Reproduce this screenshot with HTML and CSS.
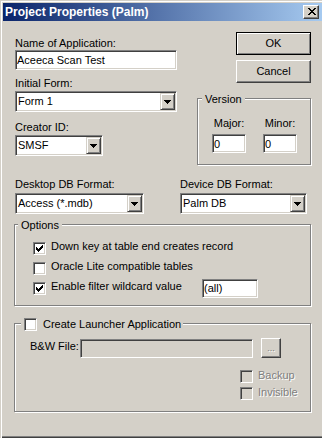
FILE: index.html
```html
<!DOCTYPE html>
<html lang="en">
<head>
    <meta charset="UTF-8">
    <meta name="viewport" content="width=device-width, initial-scale=1.0">
    <title>Project Properties (Palm)</title>
    <link rel="stylesheet" href="styles.css">
</head>
<body>
    <div class="window">
        <!-- Title bar -->
        <div class="titlebar">
            <span class="title">Project Properties (Palm)</span>
            <button class="close-btn" aria-label="Close">
                <svg width="8" height="7" viewBox="0 0 8 7"><path d="M0 0h2v1H0zM6 0h2v1H6zM1 1h2v1H1zM5 1h2v1H5zM2 2h4v1H2zM3 3h2v1H3zM2 4h4v1H2zM1 5h2v1H1zM5 5h2v1H5zM0 6h2v1H0zM6 6h2v1H6z"/></svg>
            </button>
        </div>

        <div class="dialog-body">
            <div class="top">
                <!-- Left: name, form, creator -->
                <div class="left-col">
                    <label class="lbl lbl-name">Name of Application:</label>
                    <input type="text" class="edit name-edit" value="Aceeca Scan Test">
                    <label class="lbl lbl-form">Initial Form:</label>
                    <div class="combo combo-form">
                        <span class="combo-text">Form 1</span>
                        <span class="combo-btn"><svg width="7" height="4" viewBox="0 0 7 4"><path d="M0 0h7v1H0zM1 1h5v1H1zM2 2h3v1H2zM3 3h1v1H3z"/></svg></span>
                    </div>
                    <label class="lbl lbl-creator">Creator ID:</label>
                    <div class="combo combo-creator">
                        <span class="combo-text">SMSF</span>
                        <span class="combo-btn"><svg width="7" height="4" viewBox="0 0 7 4"><path d="M0 0h7v1H0zM1 1h5v1H1zM2 2h3v1H2zM3 3h1v1H3z"/></svg></span>
                    </div>
                </div>

                <!-- Right: buttons and version -->
                <div class="right-col">
                    <button class="btn btn-default">OK</button>
                    <button class="btn btn-cancel">Cancel</button>
                    <fieldset class="group version-group">
                        <legend>Version</legend>
                        <div class="version-fields">
                            <div class="version-field">
                                <span class="version-lbl">Major:</span>
                                <input type="text" class="edit small-edit" value="0">
                            </div>
                            <div class="version-field">
                                <span class="version-lbl">Minor:</span>
                                <input type="text" class="edit small-edit" value="0">
                            </div>
                        </div>
                    </fieldset>
                </div>
            </div>

            <!-- DB formats -->
            <div class="db-row">
                <div class="db-field">
                    <label class="lbl">Desktop DB Format:</label>
                    <div class="combo combo-db">
                        <span class="combo-text">Access (*.mdb)</span>
                        <span class="combo-btn"><svg width="7" height="4" viewBox="0 0 7 4"><path d="M0 0h7v1H0zM1 1h5v1H1zM2 2h3v1H2zM3 3h1v1H3z"/></svg></span>
                    </div>
                </div>
                <div class="db-field">
                    <label class="lbl">Device DB Format:</label>
                    <div class="combo combo-db">
                        <span class="combo-text">Palm DB</span>
                        <span class="combo-btn"><svg width="7" height="4" viewBox="0 0 7 4"><path d="M0 0h7v1H0zM1 1h5v1H1zM2 2h3v1H2zM3 3h1v1H3z"/></svg></span>
                    </div>
                </div>
            </div>

            <!-- Options -->
            <fieldset class="group options-group">
                <legend>Options</legend>
                <div class="options-list">
                    <div class="check-row">
                        <span class="checkbox"><svg width="7" height="7" viewBox="0 0 7 7"><path d="M0 2h1v3H0zM1 3h1v3H1zM2 4h1v3H2zM3 3h1v3H3zM4 2h1v3H4zM5 1h1v3H5zM6 0h1v3H6z"/></svg></span>
                        <span class="check-text">Down key at table end creates record</span>
                    </div>
                    <div class="check-row">
                        <span class="checkbox"></span>
                        <span class="check-text">Oracle Lite compatible tables</span>
                    </div>
                    <div class="check-row">
                        <span class="checkbox"><svg width="7" height="7" viewBox="0 0 7 7"><path d="M0 2h1v3H0zM1 3h1v3H1zM2 4h1v3H2zM3 3h1v3H3zM4 2h1v3H4zM5 1h1v3H5zM6 0h1v3H6z"/></svg></span>
                        <span class="check-text wildcard-text">Enable filter wildcard value</span>
                        <input type="text" class="edit filter-edit" value="(all)">
                    </div>
                </div>
            </fieldset>

            <!-- Launcher -->
            <fieldset class="group launcher-group">
                <legend>
                    <span class="legend-check">
                        <span class="checkbox"></span>
                        <span class="legend-text">Create Launcher Application</span>
                    </span>
                </legend>
                <div class="bw-row">
                    <span class="bw-lbl">B&amp;W File:</span>
                    <input type="text" class="edit bw-edit" disabled>
                    <button class="btn browse-btn" disabled>...</button>
                </div>
                <div class="launcher-opts">
                    <div class="check-row small-row">
                        <span class="checkbox disabled"></span>
                        <span class="check-text disabled-text">Backup</span>
                    </div>
                    <div class="check-row small-row">
                        <span class="checkbox disabled"></span>
                        <span class="check-text disabled-text">Invisible</span>
                    </div>
                </div>
            </fieldset>
        </div>
    </div>
</body>
</html>
```

FILE: styles.css
```css
body {
    margin: 0;
    font-family: "Liberation Sans", Arial, sans-serif;
    font-size: 11px;
    line-height: 13px;
    color: #000;
    background: #d4d0c8;
}
.window {
    width: 322px;
    height: 438px;
    box-sizing: border-box;
    padding: 3px 0 3px 3px;
    background: #d4d0c8;
    box-shadow: inset 1px 1px #d4d0c8, inset 2px 2px #fff, inset 0 -1px #404040, inset 0 -2px #808080;
    overflow: hidden;
}

/* title bar */
.titlebar {
    height: 18px;
    display: flex;
    align-items: center;
    justify-content: space-between;
    padding: 0 3px 0 2px;
    background: linear-gradient(to right, #0a246a, #a6caf0);
}
.title {
    color: #fff;
    font-weight: bold;
    font-size: 12px;
    line-height: 18px;
}
.close-btn {
    width: 16px;
    height: 14px;
    box-sizing: border-box;
    padding: 0 0 1px 1px;
    display: flex;
    align-items: center;
    justify-content: center;
    background: #d4d0c8;
    border: 1px solid;
    border-color: #fff #404040 #404040 #fff;
    box-shadow: inset -1px -1px #808080;
}
.close-btn svg {
    display: block;
}

.dialog-body {
    padding: 11px 11px 0 11px;
}
.top {
    display: flex;
    justify-content: space-between;
}
.left-col {
    width: 162px;
    margin-left: 1px;
    display: flex;
    flex-direction: column;
}
.lbl {
    display: block;
}
.lbl-name {
    margin-top: 5px;
}
.name-edit {
    margin-top: 6px;
    width: 162px;
}
.lbl-form {
    margin-top: 7px;
}
.combo-form {
    margin-top: 1px;
    width: 162px;
}
.lbl-creator {
    margin-top: 9px;
}
.combo-creator {
    margin-top: 1px;
    width: 88px;
}

/* sunken edit */
.edit {
    box-sizing: border-box;
    height: 20px;
    margin: 0;
    padding: 0 1px;
    font: inherit;
    color: #000;
    background: #fff;
    border: 1px solid;
    border-color: #808080 #fff #fff #808080;
    box-shadow: inset 1px 1px #404040, inset -1px -1px #d4d0c8;
    outline: none;
    border-radius: 0;
}
.edit:disabled {
    background: #d4d0c8;
}

/* combo box */
.combo {
    box-sizing: border-box;
    height: 21px;
    display: flex;
    padding: 1px;
    background: #fff;
    border: 1px solid;
    border-color: #808080 #fff #fff #808080;
    box-shadow: inset 1px 1px #404040, inset -1px -1px #d4d0c8;
}
.combo-text {
    flex: 1;
    display: flex;
    align-items: center;
    padding-left: 1px;
    white-space: nowrap;
}
.combo-btn {
    width: 15px;
    box-sizing: border-box;
    display: flex;
    align-items: center;
    justify-content: center;
    background: #d4d0c8;
    border: 1px solid;
    border-color: #d4d0c8 #404040 #404040 #d4d0c8;
    box-shadow: inset 1px 1px #fff, inset -1px -1px #808080;
}
.combo-btn svg {
    display: block;
}

/* push buttons */
.right-col {
    width: 114px;
    display: flex;
    flex-direction: column;
    align-items: flex-end;
}
.btn {
    width: 75px;
    height: 23px;
    box-sizing: border-box;
    margin: 0;
    padding: 0;
    font: inherit;
    color: #000;
    background: #d4d0c8;
    border: 1px solid;
    border-color: #fff #404040 #404040 #fff;
    box-shadow: inset -1px -1px #808080;
    border-radius: 0;
}
.btn-default {
    border-color: #000;
    box-shadow: inset 1px 1px #fff, inset -1px -1px #808080;
}
.btn-cancel {
    margin-top: 5px;
}

/* group boxes */
.group {
    margin: 0;
    padding: 0;
    min-width: 0;
    border: 1px solid #808080;
    box-shadow: inset 1px 1px #fff, 1px 1px #fff;
}
.group legend {
    margin-left: 3px;
    padding: 3px 3px 0;
    line-height: 13px;
    background: #d4d0c8;
}
.version-group {
    width: 114px;
    box-sizing: border-box;
    margin-top: 7px;
    padding: 11px 0 11px;
}
.version-group legend {
    margin-left: 4px;
}
.version-fields {
    display: flex;
    gap: 17px;
    padding-left: 14px;
}
.version-field {
    width: 34px;
    display: flex;
    flex-direction: column;
    align-items: center;
}
.version-lbl {
    margin-bottom: 4px;
}
.small-edit {
    width: 34px;
    height: 19px;
}

/* db formats */
.db-row {
    display: grid;
    grid-template-columns: 129px 127px;
    column-gap: 36px;
    margin: 13px 0 0 1px;
}
.combo-db {
    margin-top: 2px;
}

/* options */
.options-group {
    margin-top: 2px;
    padding: 6px 0 7px;
}
.options-list {
    padding-left: 18px;
}
.check-row {
    height: 20px;
    display: flex;
    align-items: center;
}
.checkbox {
    width: 13px;
    height: 13px;
    box-sizing: border-box;
    flex-shrink: 0;
    padding: 2px;
    background: #fff;
    border: 1px solid;
    border-color: #808080 #fff #fff #808080;
    box-shadow: inset 1px 1px #404040, inset -1px -1px #d4d0c8;
}
.checkbox svg {
    display: block;
}
.checkbox.disabled {
    background: #d4d0c8;
}
.check-text {
    margin: 0 0 3px 5px;
    white-space: nowrap;
}
.wildcard-text {
    width: 151px;
}
.filter-edit {
    width: 56px;
    height: 19px;
}

/* launcher */
.launcher-group {
    margin-top: 9px;
    padding: 7px 0 9px;
}
.launcher-group legend {
    margin-left: 6px;
    padding: 3px 2px 0 3px;
}
.legend-check {
    display: flex;
    align-items: flex-start;
}
.legend-text {
    margin-left: 6px;
}
.bw-row {
    height: 20px;
    display: flex;
    align-items: center;
    padding-left: 15px;
}
.bw-lbl {
    width: 50px;
    margin-bottom: 3px;
}
.bw-edit {
    width: 173px;
    height: 19px;
}
.browse-btn {
    width: 20px;
    height: 20px;
    margin-left: 8px;
    color: #808080;
    text-shadow: 1px 1px #fff;
    font-size: 9px;
}
.launcher-opts {
    margin-top: 10px;
    padding-left: 225px;
}
.small-row {
    height: 17px;
}
.disabled-text {
    color: #808080;
    text-shadow: 1px 1px #fff;
}
```
